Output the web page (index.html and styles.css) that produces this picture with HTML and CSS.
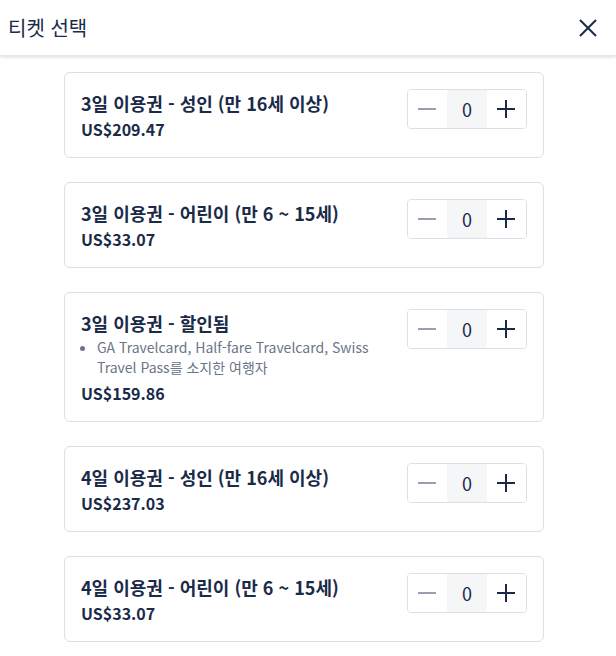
FILE: index.html
```html
<!DOCTYPE html>
<html lang="ko">
<head>
    <meta charset="UTF-8">
    <meta name="viewport" content="width=device-width, initial-scale=1.0">
    <title>티켓 선택</title>
    <link rel="stylesheet" href="styles.css">
</head>
<body>
    <div class="cabecalho">
        <h1 class="titulo">티켓 선택</h1>
        <button class="fechar" aria-label="닫기">
            <svg width="20" height="20" viewBox="0 0 20 20"><path d="M2 2 L18 18 M18 2 L2 18" stroke="#1a2b49" stroke-width="2" fill="none"/></svg>
        </button>
    </div>
    <div class="lista">
        <div class="cartao">
            <div class="info">
                <div class="nome">3일 이용권 - 성인 (만 16세 이상)</div>
                <div class="preco">US$209.47</div>
            </div>
            <div class="contador">
                <button class="passo menos"><span></span></button>
                <div class="valor">0</div>
                <button class="passo mais"><span></span></button>
            </div>
        </div>
        <div class="cartao">
            <div class="info">
                <div class="nome">3일 이용권 - 어린이 (만 6 ~ 15세)</div>
                <div class="preco">US$33.07</div>
            </div>
            <div class="contador">
                <button class="passo menos"><span></span></button>
                <div class="valor">0</div>
                <button class="passo mais"><span></span></button>
            </div>
        </div>
        <div class="cartao">
            <div class="info">
                <div class="nome">3일 이용권 - 할인됨</div>
                <ul class="notas">
                    <li>GA Travelcard, Half-fare Travelcard, Swiss Travel Pass를 소지한 여행자</li>
                </ul>
                <div class="preco">US$159.86</div>
            </div>
            <div class="contador">
                <button class="passo menos"><span></span></button>
                <div class="valor">0</div>
                <button class="passo mais"><span></span></button>
            </div>
        </div>
        <div class="cartao">
            <div class="info">
                <div class="nome">4일 이용권 - 성인 (만 16세 이상)</div>
                <div class="preco">US$237.03</div>
            </div>
            <div class="contador">
                <button class="passo menos"><span></span></button>
                <div class="valor">0</div>
                <button class="passo mais"><span></span></button>
            </div>
        </div>
        <div class="cartao">
            <div class="info">
                <div class="nome">4일 이용권 - 어린이 (만 6 ~ 15세)</div>
                <div class="preco">US$33.07</div>
            </div>
            <div class="contador">
                <button class="passo menos"><span></span></button>
                <div class="valor">0</div>
                <button class="passo mais"><span></span></button>
            </div>
        </div>
    </div>
</body>
</html>
```

FILE: styles.css
```css
body {
    margin: 0;
    background-color: white;
    color: #1a2b49;
    font-family: "Noto Sans CJK KR", "Noto Sans", sans-serif;
}
.cabecalho {
    height: 56px;
    display: flex;
    align-items: center;
    justify-content: space-between;
    padding: 0 18px 0 8px;
    box-shadow: 0 1px 3px rgba(26, 43, 73, 0.18);
    border-bottom: 1px solid #e4e6ea;
    box-sizing: border-box;
}
.titulo {
    margin: 0;
    font-size: 20px;
    font-weight: 400;
}
.fechar {
    background: none;
    border: none;
    padding: 0;
    width: 20px;
    height: 20px;
    cursor: pointer;
}
.lista {
    width: 480px;
    margin: 16px 0 0 64px;
    display: flex;
    flex-direction: column;
    gap: 24px;
}
.cartao {
    display: flex;
    justify-content: space-between;
    align-items: flex-start;
    padding: 16px;
    border: 1px solid #dcdfe4;
    border-radius: 6px;
}
.info {
    flex: 1;
    padding-right: 20px;
}
.nome {
    font-size: 18px;
    font-weight: 700;
    line-height: 28px;
}
.preco {
    font-size: 16px;
    font-weight: 700;
    line-height: 24px;
}
.notas {
    margin: 0 0 4px;
    padding-left: 16px;
    font-size: 14px;
    line-height: 20px;
    color: #6b7589;
}
.contador {
    display: flex;
    width: 120px;
    height: 40px;
    border: 1px solid #dcdfe4;
    border-radius: 4px;
    box-sizing: border-box;
    overflow: hidden;
}
.passo {
    width: 40px;
    border: none;
    background: white;
    position: relative;
    padding: 0;
    cursor: pointer;
}
.passo span {
    position: absolute;
    left: 10px;
    top: 18px;
    width: 18px;
    height: 2px;
    background-color: #1a2b49;
}
.menos span {
    background-color: #9aa0ab;
}
.mais span::after {
    content: "";
    position: absolute;
    left: 8px;
    top: -8px;
    width: 2px;
    height: 18px;
    background-color: #1a2b49;
}
.valor {
    width: 40px;
    background-color: #f5f6f8;
    display: flex;
    align-items: center;
    justify-content: center;
    font-size: 18px;
}
```
